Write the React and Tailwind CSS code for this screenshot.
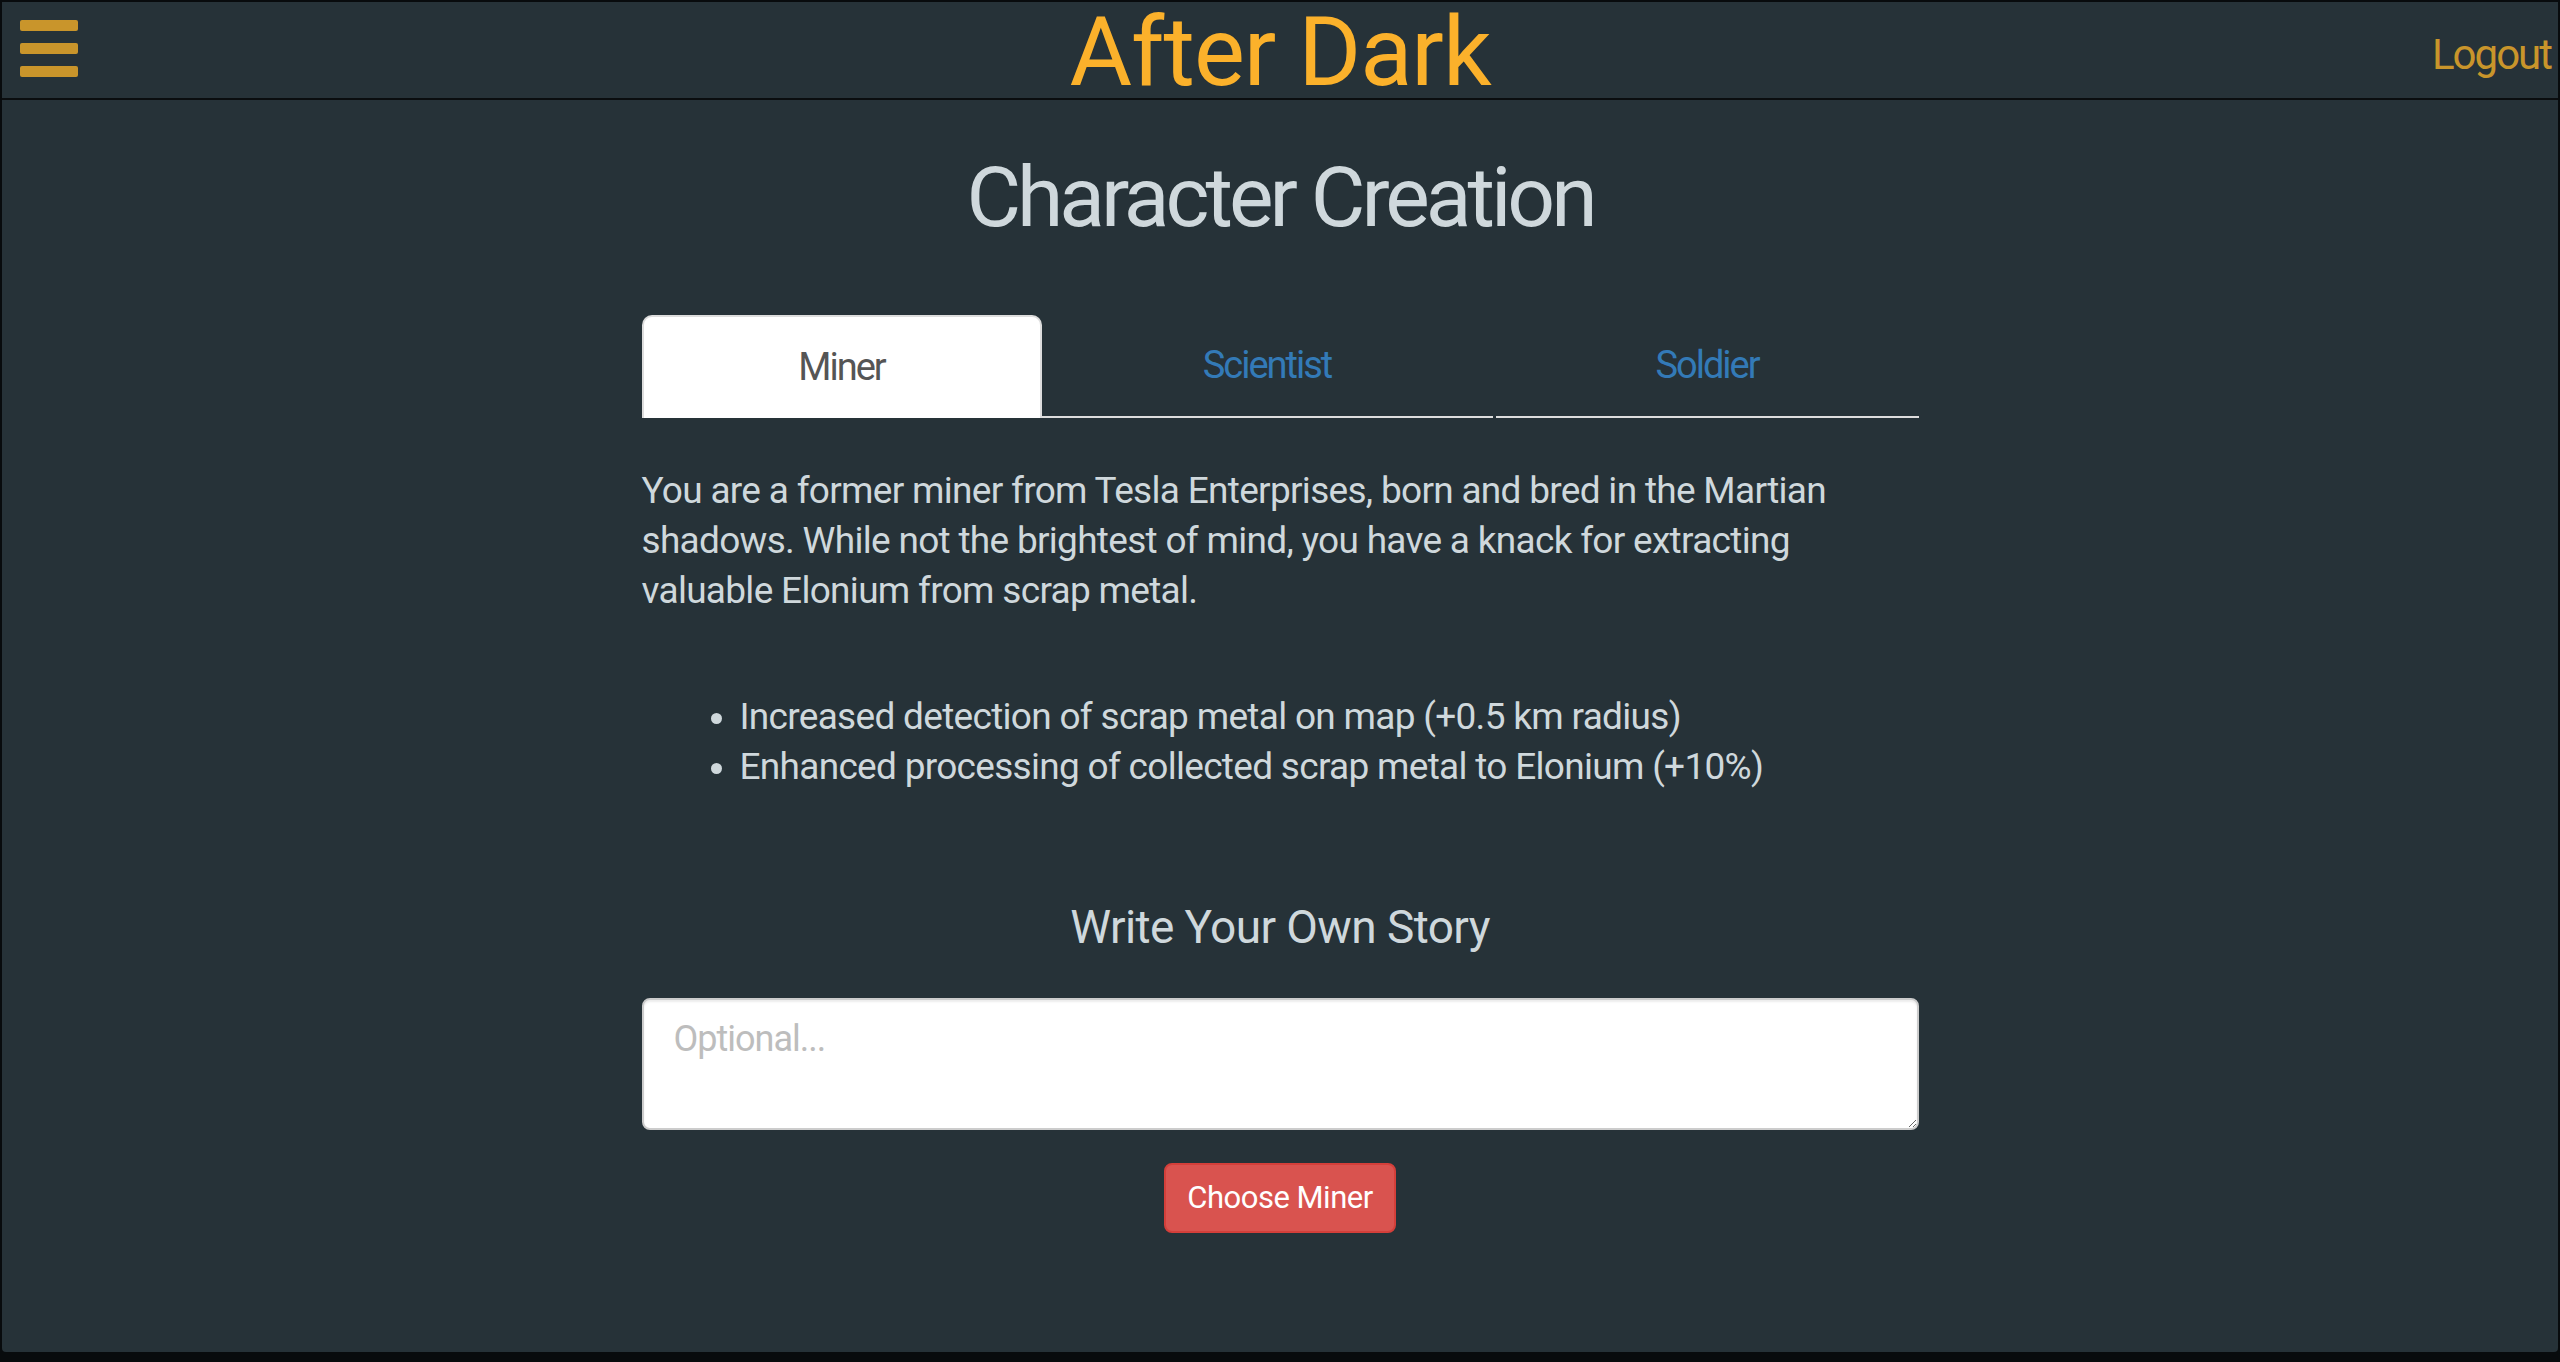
import React from "react";

const TABS = [
    { label: "Miner", w: "w-[400px]" },
    { label: "Scientist", w: "w-[451px]" },
    { label: "Soldier", w: "flex-1" },
];

const PERKS = [
    "Increased detection of scrap metal on map (+0.5 km radius)",
    "Enhanced processing of collected scrap metal to Elonium (+10%)",
];

export default function App() {
    return (
        <div className="min-h-screen bg-[#080b0d] px-[2px] pt-[2px] pb-[10px] font-['Roboto',sans-serif]">
            <div className="flex h-[1350px] flex-col rounded-b-[4px] bg-[#263238]">
                <header className="grid h-[98px] grid-cols-[1fr_auto_1fr] border-b-2 border-[#0a0d0f]">
                    <div className="flex flex-col gap-[12px] pl-[18px] pt-[18px]">
                        <span className="h-[11px] w-[58px] rounded-[2px] bg-[#c9952b]" />
                        <span className="h-[11px] w-[58px] rounded-[2px] bg-[#c9952b]" />
                        <span className="h-[11px] w-[58px] rounded-[2px] bg-[#c9952b]" />
                    </div>
                    <h1 className="pt-[2px] text-[96px] leading-[96px] tracking-[-1px] text-[#fbb12b]">
                        After Dark
                    </h1>
                    <div className="flex justify-end pr-[7px] pt-[28px]">
                        <a className="text-[42px] leading-[50px] tracking-[-2px] text-[#c9952b]">Logout</a>
                    </div>
                </header>

                <main className="mx-auto flex w-[1277px] flex-col">
                    <h2 className="mt-[48px] text-center text-[84px] leading-[100px] tracking-[-4px] text-[#cfd8dc]">
                        Character Creation
                    </h2>

                    <nav className="mt-[67px] flex h-[103px]">
                        {TABS.map((t, i) =>
                            i === 0 ? (
                                <div
                                    key={t.label}
                                    className={`${t.w} flex items-center justify-center rounded-t-[10px] border-2 border-b-0 border-[#dddddd] bg-white text-[38px] tracking-[-2px] text-[#555555]`}
                                >
                                    {t.label}
                                </div>
                            ) : (
                                <div
                                    key={t.label}
                                    className={`${t.w} ${i === 2 ? "ml-[3px]" : ""} flex items-center justify-center border-b-2 border-[#dddddd] text-[38px] tracking-[-2px] text-[#337ab7]`}
                                >
                                    {t.label}
                                </div>
                            )
                        )}
                    </nav>

                    <p className="mt-[48px] text-[37px] leading-[50px] tracking-[-0.7px] text-[#cfd8dc]">
                        You are a former miner from Tesla Enterprises, born and bred in the Martian shadows. While
                        not the brightest of mind, you have a knack for extracting valuable Elonium from scrap metal.
                    </p>

                    <ul className="mt-[76px] list-disc pl-[98px] text-[37px] leading-[50px] tracking-[-0.7px] text-[#cfd8dc]">
                        {PERKS.map((p) => (
                            <li key={p}>{p}</li>
                        ))}
                    </ul>

                    <h3 className="mt-[105px] text-center text-[46px] leading-[60px] tracking-[-0.6px] text-[#cfd8dc]">
                        Write Your Own Story
                    </h3>

                    <textarea
                        placeholder="Optional..."
                        className="mt-[41px] h-[132px] w-full rounded-[8px] border-2 border-[#cccccc] bg-white px-[30px] py-[14px] text-[36px] leading-[50px] tracking-[-1px] text-[#555555] shadow-[inset_0_2px_2px_rgba(0,0,0,0.075)] outline-none placeholder:text-[#bdbdbd]"
                    />

                    <div className="mt-[33px] flex justify-center">
                        <button className="h-[70px] w-[232px] rounded-[8px] border-2 border-[#d43f3a] bg-[#d9534f] text-[31px] tracking-[-0.5px] text-white">
                            Choose Miner
                        </button>
                    </div>
                </main>
            </div>
        </div>
    );
}
